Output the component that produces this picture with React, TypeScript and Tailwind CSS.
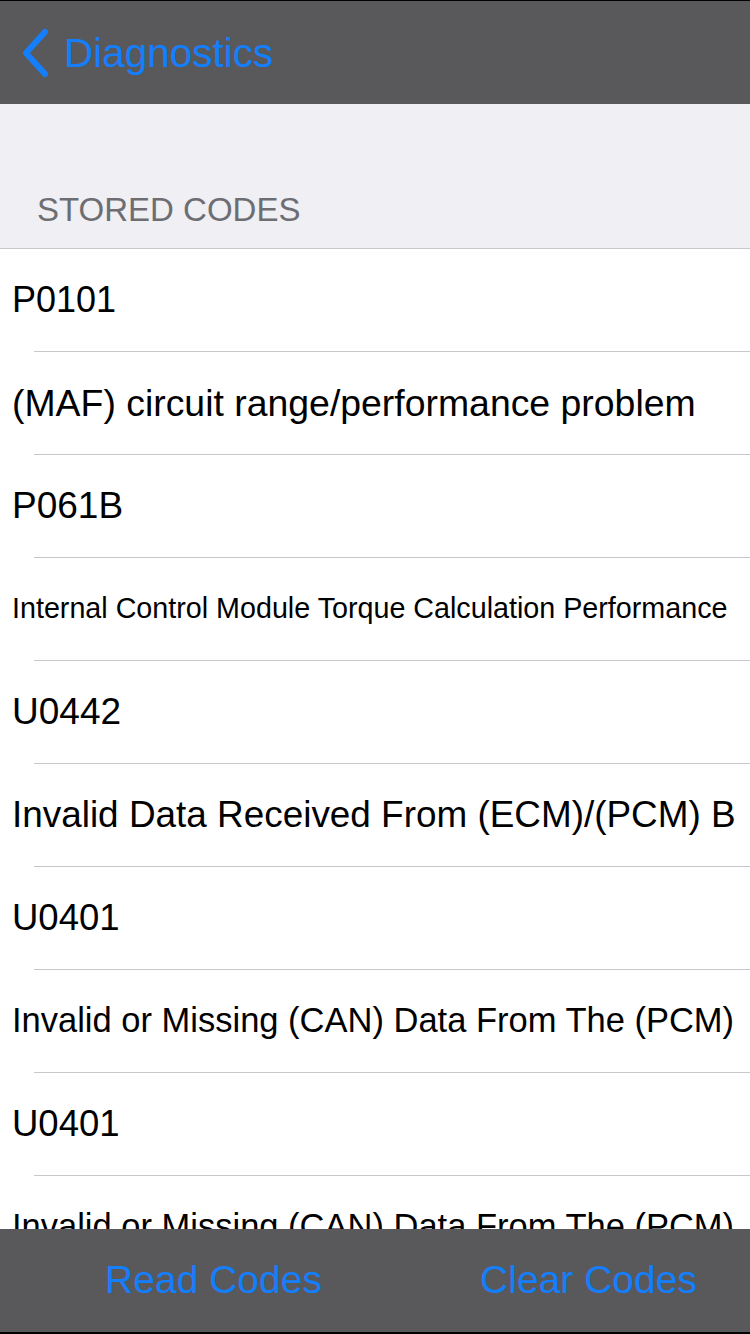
import React from 'react';

const rows = [
  { text: 'P0101', size: 'text-[36px]' },
  { text: '(MAF) circuit range/performance problem', size: 'text-[37.4px]' },
  { text: 'P061B', size: 'text-[37px]' },
  { text: 'Internal Control Module Torque Calculation Performance', size: 'text-[28.7px]' },
  { text: 'U0442', size: 'text-[37px]' },
  { text: 'Invalid Data Received From (ECM)/(PCM) B', size: 'text-[36.9px]' },
  { text: 'U0401', size: 'text-[36.5px]' },
  { text: 'Invalid or Missing (CAN) Data From The (PCM)', size: 'text-[34.5px]' },
  { text: 'U0401', size: 'text-[36.5px]' },
  { text: 'Invalid or Missing (CAN) Data From The (PCM)', size: 'text-[34.5px]' },
];

export default function App() {
  return (
    <div className="flex h-[1334px] w-[750px] flex-col overflow-hidden bg-[#efeff4] font-['Liberation_Sans',Arial,sans-serif]">
      {/* Nav bar */}
      <div className="flex h-[104px] shrink-0 items-center border-t border-black bg-[#59595b] pl-[20px]">
        <svg width="30" height="50" viewBox="0 0 30 50" className="shrink-0">
          <path d="M25 4 L6 25 L25 46" fill="none" stroke="#147efb" strokeWidth="6" strokeLinecap="round" strokeLinejoin="round" />
        </svg>
        <span className="ml-[14px] mt-[2px] text-[40.5px] leading-none text-[#147efb]">Diagnostics</span>
      </div>

      {/* Content */}
      <div className="min-h-0 flex-1 overflow-hidden">
        <div className="flex h-[144px] items-end px-[37px] pb-[22px]">
          <span className="text-[33px] leading-none text-[#6d6d72]">STORED CODES</span>
        </div>
        <div className="border-t border-[#c8c7cc] bg-white">
          {rows.map((row, i) => (
            <div key={i} className="flex flex-col">
              <div className="flex h-[102px] items-center whitespace-nowrap pl-[12px]">
                <span className={`${row.size} text-black`}>{row.text}</span>
              </div>
              <div className="ml-[34px] h-px bg-[#c8c7cc]" />
            </div>
          ))}
        </div>
      </div>

      {/* Toolbar */}
      <div className="flex h-[105px] shrink-0 items-center border-b-2 border-black bg-[#59595b]">
        <div className="flex flex-1 justify-center pl-[52px]">
          <span className="text-[39px] text-[#147efb]">Read Codes</span>
        </div>
        <div className="flex flex-1 justify-center pl-[52px]">
          <span className="text-[39px] text-[#147efb]">Clear Codes</span>
        </div>
      </div>
    </div>
  );
}
